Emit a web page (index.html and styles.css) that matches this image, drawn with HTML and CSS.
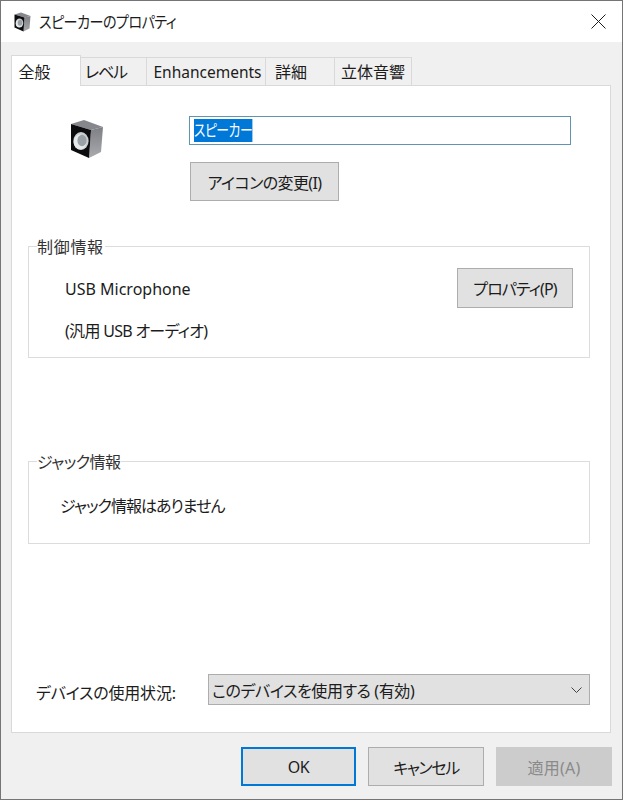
FILE: index.html
```html
<!DOCTYPE html>
<html lang="ja">
<head>
<meta charset="utf-8">
<title>スピーカーのプロパティ</title>
<link rel="stylesheet" href="styles.css">
</head>
<body>
<svg class="defs" width="0" height="0" aria-hidden="true">
  <defs>
    <linearGradient id="side" x1="0" y1="0" x2="0" y2="1">
      <stop offset="0" stop-color="#7d7f84"/>
      <stop offset="1" stop-color="#a9abaf"/>
    </linearGradient>
    <symbol id="speaker" viewBox="0 0 34 40">
      <polygon points="1,5 14,1 33,8 21,11" fill="#85878c"/>
      <polygon points="21,11 33,8 31,33 19,39" fill="url(#side)"/>
      <polygon points="1,5 21,11 19,39 1,31" fill="#0c0c0e"/>
      <ellipse cx="11" cy="22" rx="7.6" ry="9" fill="#c9ced1"/>
      <ellipse cx="10" cy="23" rx="6.4" ry="7.6" fill="#e6e9ea"/>
      <ellipse cx="12" cy="21.5" rx="4.6" ry="5.8" fill="#9aa1a6"/>
    </symbol>
  </defs>
</svg>
<main class="window">
  <header class="titlebar">
    <svg class="title-icon"><use href="#speaker"/></svg>
    <h1 class="title"><span class="title-text">スピーカーのプロパティ</span></h1>
    <svg class="close" viewBox="0 0 15 15"><path d="M0.5 0.5 14.5 14.5M14.5 0.5 0.5 14.5" stroke="#1c1c1c" stroke-width="1" fill="none"/></svg>
  </header>
  <div class="content">
    <nav class="tabs">
      <div class="tab tab-active">全般</div>
      <div class="tab tab-level">レベル</div>
      <div class="tab tab-enh">Enhancements</div>
      <div class="tab tab-detail">詳細</div>
      <div class="tab tab-spatial">立体音響</div>
    </nav>
    <section class="panel">
      <div class="device-row">
        <svg class="device-icon"><use href="#speaker"/></svg>
        <div class="device-fields">
          <div class="name-input"><span class="selected">スピーカー</span></div>
          <button class="btn btn-icon">アイコンの変更(I)</button>
        </div>
      </div>
      <fieldset class="group group-control">
        <legend class="legend legend-control">制御情報</legend>
        <div class="control-row">
          <div class="control-text">
            <p class="line">USB Microphone</p>
            <p class="line line-second">(汎用 USB オーディオ)</p>
          </div>
          <button class="btn btn-prop">プロパティ(P)</button>
        </div>
      </fieldset>
      <fieldset class="group group-jack">
        <legend class="legend legend-jack">ジャック情報</legend>
        <p class="line jack-text">ジャック情報はありません</p>
      </fieldset>
      <div class="usage-row">
        <span class="usage-label">デバイスの使用状況:</span>
        <div class="select">
          <span>このデバイスを使用する (有効)</span>
          <svg class="chevron" viewBox="0 0 11 6"><path d="M0.5 0.5 5.5 5.5 10.5 0.5" stroke="#444" stroke-width="1" fill="none"/></svg>
        </div>
      </div>
    </section>
    <footer class="actions">
      <button class="btn btn-action btn-default">OK</button>
      <button class="btn btn-action btn-cancel">キャンセル</button>
      <button class="btn btn-action btn-disabled">適用(A)</button>
    </footer>
  </div>
</main>
</body>
</html>
```
FILE: styles.css
```css
* { box-sizing: border-box; }
html, body { margin: 0; padding: 0; }
body {
  width: 623px;
  height: 800px;
  overflow: hidden;
  font-family: "Noto Sans", "Noto Sans CJK JP", sans-serif;
  font-size: 16px;
  color: #1c1c1c;
  font-feature-settings: "palt";
}
.defs { position: absolute; }
.window {
  width: 623px;
  height: 800px;
  border: 1px solid #757575;
  display: flex;
  flex-direction: column;
  background: #f0f0f0;
}
.titlebar {
  height: 41px;
  background: #fff;
  display: flex;
  align-items: center;
  padding: 0 16px 0 13px;
}
.title-icon { width: 17px; height: 20px; margin-right: 8px; }
.title { font-size: 16px; font-weight: 400; margin: 0; flex: 1; line-height: 24px; letter-spacing: -0.6px; }
.title-text { display: inline-block; transform: scaleX(0.88); transform-origin: left center; white-space: nowrap; }
.close { width: 15px; height: 15px; }
.content { flex: 1; display: flex; flex-direction: column; padding: 0 10px; }
.tabs { display: flex; height: 44px; align-items: flex-end; margin-bottom: -1px; position: relative; z-index: 1; }
.tab {
  height: 29px;
  background: #f0f0f0;
  border: 1px solid #d9d9d9;
  border-left: 0;
  text-align: center;
  line-height: 28px;
  white-space: nowrap;
}
.tab-active {
  width: 70px;
  height: 31px;
  background: #fff;
  border-left: 1px solid #d9d9d9;
  border-bottom: 0;
  line-height: 32px;
  padding-right: 23px;
}
.tab-level { width: 66px; letter-spacing: -1.2px; padding-right: 15px; }
.tab-enh { width: 119px; font-size: 15.5px; padding-left: 3px; }
.tab-detail { width: 69px; padding-right: 18px; }
.tab-spatial { width: 77px; }
.panel {
  height: 648px;
  width: 600px;
  background: #fff;
  border: 1px solid #d9d9d9;
  display: flex;
  flex-direction: column;
  padding: 0 20px 0 16px;
}
.device-row { display: flex; height: 151px; padding: 30px 0 0 42px; }
.device-icon { width: 34px; height: 40px; margin-top: 3px; }
.device-fields { margin-left: 85px; display: flex; flex-direction: column; align-items: flex-start; }
.name-input {
  width: 382px;
  height: 29px;
  border: 1px solid #5f94b3;
  padding: 2px 4px;
  background: #fff;
  line-height: 23px;
}
.selected {
  display: inline-block;
  height: 23px;
  background: #0078d7;
  color: #fff;
  letter-spacing: -0.6px;
  transform: scaleX(0.8);
  transform-origin: left center;
}
.btn {
  font: inherit;
  font-feature-settings: inherit;
  color: inherit;
  background: #e1e1e1;
  border: 1px solid #adadad;
  padding: 0;
  letter-spacing: -0.4px;
}
.btn-icon { width: 149px; height: 39px; margin: 17px 0 0 1px; letter-spacing: -0.6px; }
.group {
  margin: 0;
  padding: 0;
  border: 1px solid #dcdcdc;
  min-width: 0;
}
.legend { padding: 0 1px 0 0; margin-left: 8px; line-height: 20px; height: 18px; color: #333; }
.legend-control { letter-spacing: 0.7px; }
.legend-jack { letter-spacing: -0.6px; }
.group-control { height: 121px; }
.control-row { display: flex; justify-content: space-between; padding: 13px 16px 0 36px; }
.line { margin: 0; line-height: 24px; }
.control-text { padding-top: 9px; }
.line-second { margin-top: 18px; letter-spacing: -0.7px; }
.btn-prop { width: 116px; height: 40px; letter-spacing: -0.9px; }
.group-jack { height: 92px; margin-top: 94px; }
.jack-text { padding: 24px 0 0 31px; letter-spacing: -1px; }
.usage-row { display: flex; align-items: center; margin-top: 130px; padding-left: 8px; }
.usage-label { width: 172px; letter-spacing: -0.2px; padding-top: 4px; white-space: nowrap; }
.select {
  width: 382px;
  height: 31px;
  background: #e1e1e1;
  border: 1px solid #adadad;
  display: flex;
  align-items: center;
  justify-content: space-between;
  padding: 0 7px 0 3px;
  letter-spacing: -0.4px;
}
.chevron { width: 11px; height: 6px; }
.actions { display: flex; justify-content: flex-end; gap: 12px; margin-top: 14px; }
.btn-action { width: 116px; height: 39px; }
.btn-default { width: 115px; border: 2px solid #0078d7; }
.btn-cancel { letter-spacing: -1.4px; }
.btn-disabled { background: #cccccc; border-color: #cccccc; color: #8a8a8a; letter-spacing: 0.2px; }
```
